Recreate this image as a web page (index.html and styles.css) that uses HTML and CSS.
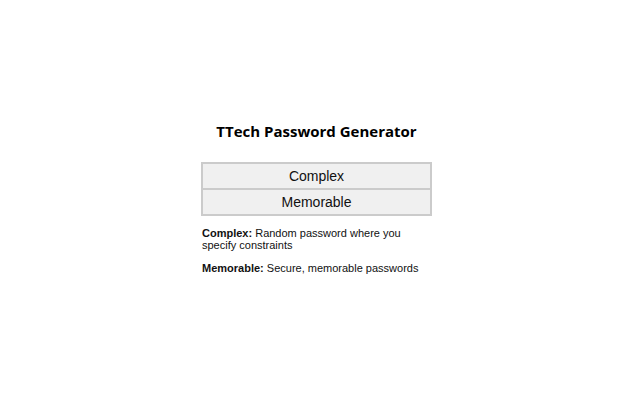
FILE: index.html
```html
<!DOCTYPE html>
<html>
<head>
<meta charset="utf-8">
<link rel="stylesheet" href="styles.css">
</head>
<body>
<div class="app">
  <h1 class="title">TTech Password Generator</h1>
  <div class="buttons">
    <button class="btn">Complex</button>
    <button class="btn btn-second">Memorable</button>
  </div>
  <p class="desc"><b>Complex:</b> Random password where you specify constraints</p>
  <p class="desc"><b>Memorable:</b> Secure, memorable passwords</p>
</div>
</body>
</html>
```
FILE: styles.css
```css
html, body {
  margin: 0;
  padding: 0;
  background: #fff;
}
body {
  padding-right: 7px;
  padding-top: 119px;
  font-family: "Liberation Sans", Arial, sans-serif;
  color: #000;
}
.app {
  width: 231px;
  margin: 0 auto;
}
.title {
  font-family: "Open Sans", "Segoe UI", sans-serif;
  font-weight: 700;
  font-size: 15px;
  line-height: 24px;
  text-align: center;
  margin: 0 0 19px 0;
}
.buttons {
  display: flex;
  flex-direction: column;
}
.btn {
  display: block;
  width: 100%;
  height: 28px;
  box-sizing: border-box;
  margin: 0;
  padding: 0;
  background: #f0f0f0;
  border: 2px solid #cbcbcb;
  font-family: "Liberation Sans", Arial, sans-serif;
  font-size: 14px;
  color: #111;
  text-align: center;
}
.btn-second {
  border-top: 0;
  height: 26px;
}
.desc {
  margin: 11px 0 0 1px;
  font-size: 11px;
  line-height: 12px;
  color: #111;
}
.desc + .desc {
  margin-top: 11px;
}
```
